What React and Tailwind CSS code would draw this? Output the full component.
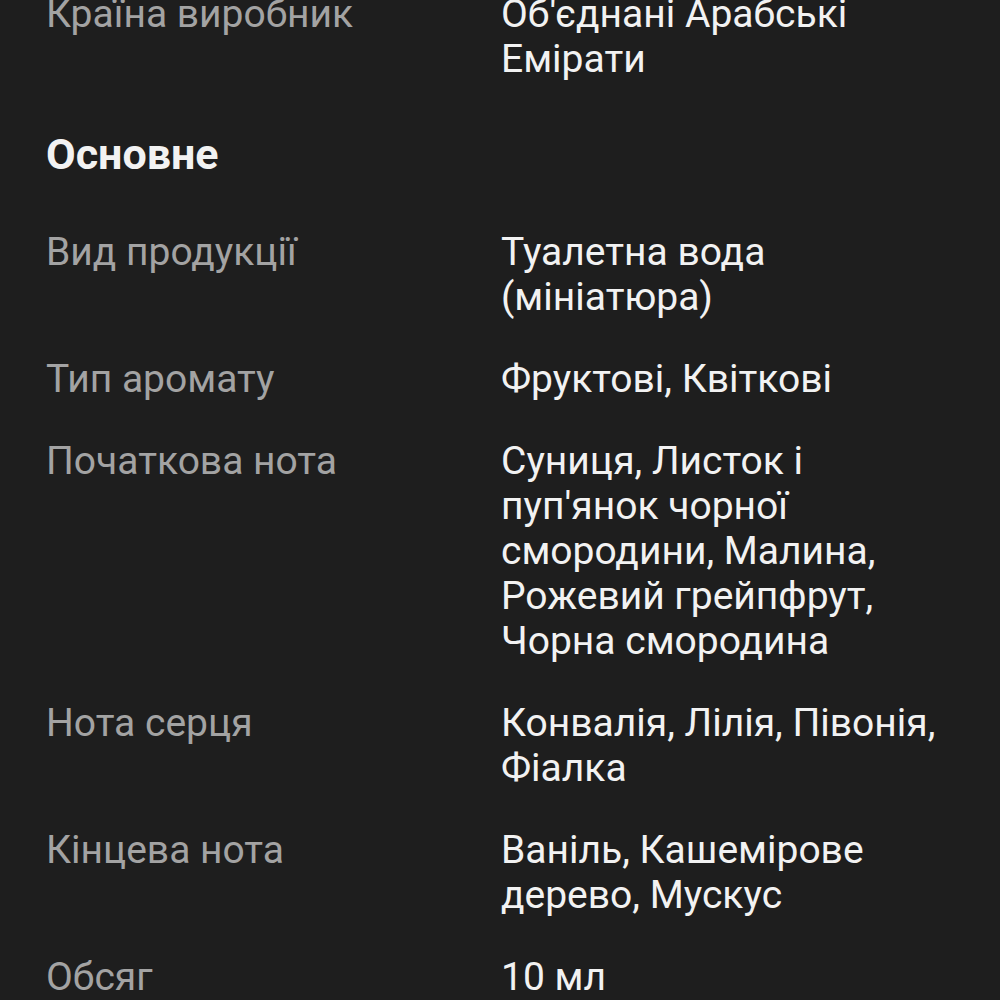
export default function App() {
  const rows1 = [["Країна виробник", "Об'єднані Арабські Емірати"]];
  const rows2 = [
    ["Вид продукції", "Туалетна вода (мініатюра)"],
    ["Тип аромату", "Фруктові, Квіткові"],
    ["Початкова нота", "Суниця, Листок і пуп'янок чорної смородини, Малина, Рожевий грейпфрут, Чорна смородина"],
    ["Нота серця", "Конвалія, Лілія, Півонія, Фіалка"],
    ["Кінцева нота", "Ваніль, Кашемірове дерево, Мускус"],
    ["Обсяг", "10 мл"],
  ];
  const Row = ({ l, v }) => (
    <div className="grid grid-cols-[455px_1fr]">
      <div className="text-[#a3a3a3]">{l}</div>
      <div className="text-[#f2f2f2]">{v}</div>
    </div>
  );
  return (
    <div
      className="w-[1000px] h-[1000px] overflow-hidden bg-[#1e1e1e] px-[46px] text-[39px] leading-[45px]"
      style={{ fontFamily: "Roboto, sans-serif" }}
    >
      <div className="-mt-[8px] flex flex-col gap-[37px]">
        {rows1.map(([l, v]) => <Row key={l} l={l} v={v} />)}
      </div>
      <div className="mt-[50px] mb-[53px] font-bold text-[43px] leading-[45px] text-[#f2f2f2]">Основне</div>
      <div className="flex flex-col gap-[37px]">
        {rows2.map(([l, v]) => <Row key={l} l={l} v={v} />)}
      </div>
    </div>
  );
}
